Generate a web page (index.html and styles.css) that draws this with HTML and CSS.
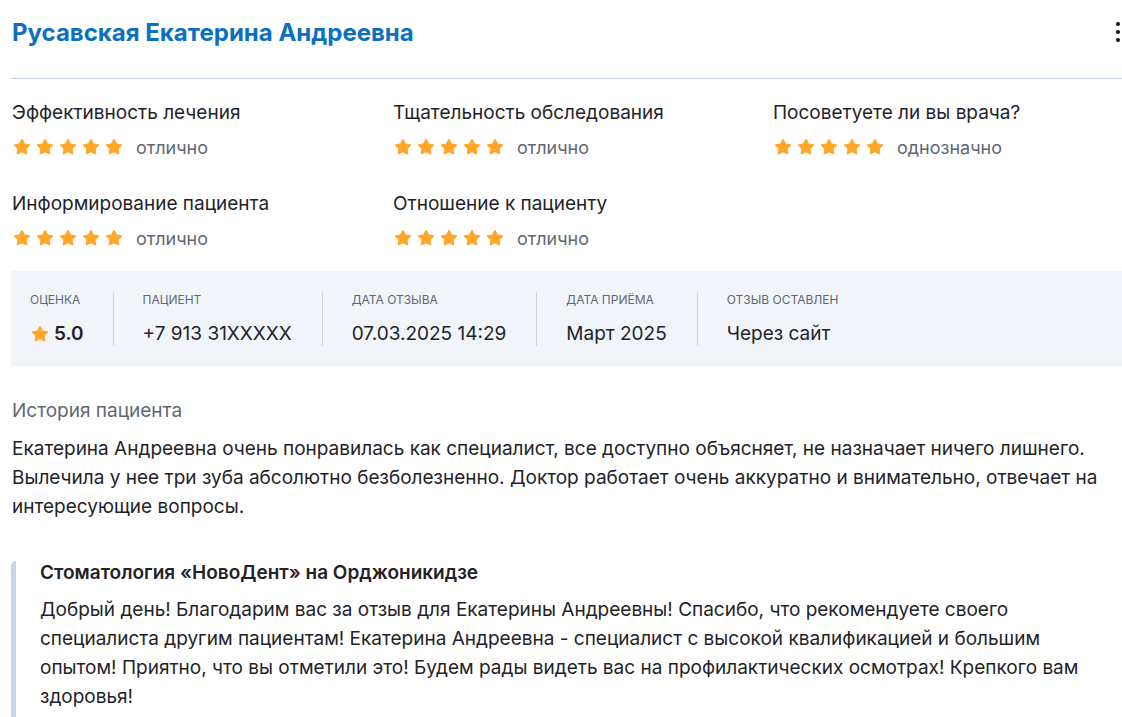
FILE: index.html
```html
<!DOCTYPE html>
<html lang="ru">
<head>
    <meta charset="UTF-8">
    <meta name="viewport" content="width=device-width, initial-scale=1.0">
    <title>Отзыв</title>
    <link rel="stylesheet" href="styles.css">
</head>
<body>
    <div class="review">
        <div class="review-head">
            <h1 class="doctor-name">Русавская Екатерина Андреевна</h1>
            <button class="more" aria-label="Ещё">
                <span></span><span></span><span></span>
            </button>
        </div>

        <div class="ratings">
            <div class="rating">
                <div class="rating-label">Эффективность лечения</div>
                <div class="rating-value"><span class="stars"></span>отлично</div>
            </div>
            <div class="rating">
                <div class="rating-label">Тщательность обследования</div>
                <div class="rating-value"><span class="stars"></span>отлично</div>
            </div>
            <div class="rating">
                <div class="rating-label">Посоветуете ли вы врача?</div>
                <div class="rating-value"><span class="stars"></span>однозначно</div>
            </div>
            <div class="rating">
                <div class="rating-label">Информирование пациента</div>
                <div class="rating-value"><span class="stars"></span>отлично</div>
            </div>
            <div class="rating">
                <div class="rating-label">Отношение к пациенту</div>
                <div class="rating-value"><span class="stars"></span>отлично</div>
            </div>
        </div>

        <div class="meta">
            <div class="meta-item">
                <div class="meta-label">Оценка</div>
                <div class="meta-value score"><span class="star-one"></span>5.0</div>
            </div>
            <div class="meta-item">
                <div class="meta-label">Пациент</div>
                <div class="meta-value">+7 913 31XXXXX</div>
            </div>
            <div class="meta-item">
                <div class="meta-label">Дата отзыва</div>
                <div class="meta-value">07.03.2025 14:29</div>
            </div>
            <div class="meta-item">
                <div class="meta-label">Дата приёма</div>
                <div class="meta-value">Март 2025</div>
            </div>
            <div class="meta-item">
                <div class="meta-label">Отзыв оставлен</div>
                <div class="meta-value">Через сайт</div>
            </div>
        </div>

        <div class="story">
            <div class="story-title">История пациента</div>
            <p class="story-text">Екатерина Андреевна очень понравилась как специалист, все доступно объясняет, не назначает ничего лишнего. Вылечила у нее три зуба абсолютно безболезненно. Доктор работает очень аккуратно и внимательно, отвечает на интересующие вопросы.</p>
        </div>

        <div class="reply">
            <div class="reply-author">Стоматология «НовоДент» на Орджоникидзе</div>
            <p class="reply-text">Добрый день! Благодарим вас за отзыв для Екатерины Андреевны! Спасибо, что рекомендуете своего специалиста другим пациентам! Екатерина Андреевна - специалист с высокой квалификацией и большим опытом! Приятно, что вы отметили это! Будем рады видеть вас на профилактических осмотрах! Крепкого вам здоровья!</p>
        </div>
    </div>

    <script>
        // пять звёзд в каждой оценке
        const STAR = '<svg viewBox="0 0 24 24" width="20" height="20"><path d="M12 2.3c.4 0 .8.2 1 .6l2.4 4.9 5.4.8c.9.1 1.2 1.2.6 1.8l-3.9 3.8.9 5.4c.2.9-.8 1.6-1.6 1.1L12 18.2l-4.8 2.5c-.8.5-1.8-.2-1.6-1.1l.9-5.4-3.9-3.8c-.6-.6-.3-1.7.6-1.8l5.4-.8 2.4-4.9c.2-.4.6-.6 1-.6z"/></svg>';
        document.querySelectorAll('.stars').forEach(el => {
            el.innerHTML = STAR.repeat(5);
        });
        document.querySelectorAll('.star-one').forEach(el => {
            el.innerHTML = STAR;
        });
    </script>
</body>
</html>
```

FILE: styles.css
```css
:root {
    --blue: #0b70c2;
    --text: #1f2329;
    --muted: #5f6875;
    --star: #ffa62b;
    --line: #c9d4e4;
    --panel: #f1f5fa;
}

body {
    margin: 0;
    font-family: Inter, 'Noto Sans', sans-serif;
    color: var(--text);
    background: #fff;
}

.review {
    margin-left: 11px;
    width: 1111px;
}

.review-head {
    display: flex;
    justify-content: space-between;
    align-items: center;
    height: 78px;
    border-bottom: 1px solid var(--line);
}

.doctor-name {
    margin: 0 0 14px 1px;
    font-size: 24px;
    font-weight: 700;
    color: var(--blue);
}

.more {
    display: flex;
    flex-direction: column;
    gap: 4px;
    padding: 0;
    margin: 0 2px 14px 0;
    border: none;
    background: none;
    cursor: pointer;
}

.more span {
    width: 4px;
    height: 4px;
    border-radius: 50%;
    background: #111;
}

.ratings {
    display: grid;
    grid-template-columns: 381px 380px 1fr;
    row-gap: 33px;
    padding: 22px 0 21px 1px;
}

.rating-label {
    font-size: 19px;
    line-height: 24px;
}

.rating-value {
    display: flex;
    align-items: center;
    height: 24px;
    margin-top: 10px;
    font-size: 18px;
    color: var(--muted);
}

.stars {
    display: flex;
    gap: 3px;
    margin-right: 12px;
    fill: var(--star);
}

.stars svg {
    display: block;
}

.meta {
    display: flex;
    align-items: stretch;
    background: var(--panel);
    padding: 21px 0 20px;
}

.meta-item {
    padding: 0 30px 0 29px;
    border-left: 1px solid var(--line);
}

.meta-item:first-child {
    padding: 0 29px 0 19px;
    border-left: none;
}

.meta-label {
    font-size: 12px;
    line-height: 16px;
    text-transform: uppercase;
    color: var(--muted);
}

.meta-value {
    margin-top: 14px;
    font-size: 19px;
    line-height: 24px;
}

.score {
    display: flex;
    align-items: center;
    gap: 4px;
    font-weight: 600;
}

.star-one {
    fill: var(--star);
}

.star-one svg {
    display: block;
}

.story {
    padding: 33px 1px 0;
}

.story-title {
    font-size: 19px;
    line-height: 24px;
    color: var(--muted);
}

.story-text {
    margin: 11px 0 0;
    font-size: 19px;
    line-height: 29px;
}

.reply {
    margin-top: 40px;
    padding: 0 20px 12px 24px;
    border-left: 5px solid var(--line);
    border-top-left-radius: 5px;
}

.reply-author {
    font-size: 19px;
    font-weight: 600;
    line-height: 24px;
}

.reply-text {
    margin: 10px 0 0;
    font-size: 19px;
    line-height: 29px;
}
```
